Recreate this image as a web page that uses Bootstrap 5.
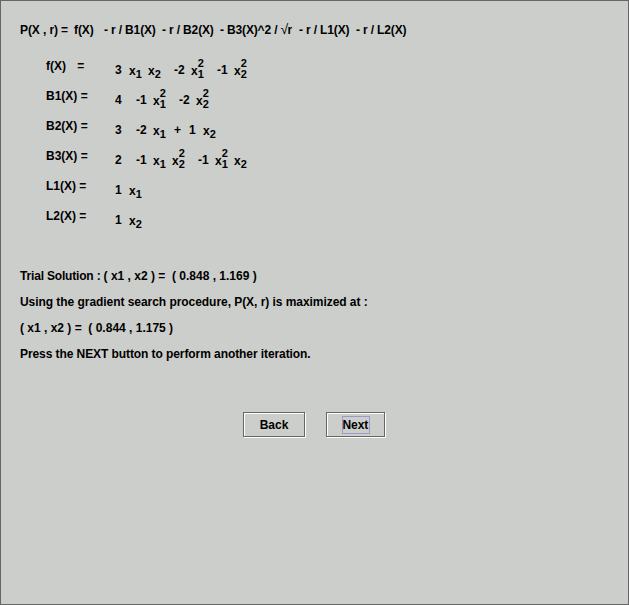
<!DOCTYPE html>
<html lang="en">
<head>
<meta charset="utf-8">
<meta name="viewport" content="width=device-width, initial-scale=1">
<title>Barrier function iteration</title>
<link rel="stylesheet" href="https://cdn.jsdelivr.net/npm/bootstrap@5.3.0/dist/css/bootstrap.min.css">
<style>
body{background:#cccecb;color:#000;font:bold 12px/16px "Liberation Sans",Arial,sans-serif;overflow:hidden}
.panel{height:605px;border:1px solid #666;padding:21px 19px 0}
.formula{height:16px;white-space:pre}
.formula>span{flex:none}
.w-lead{width:54px}.w-f{width:30px}.w-term{width:58px}.w-b3{width:79px}.w-l{width:57px}
.w-f,.w-lead{letter-spacing:-.1px}
.w-term,.w-b3,.w-l{letter-spacing:-.15px}
.root{font-size:14px;line-height:1;font-weight:normal;letter-spacing:-.8px}
.rows{padding:20px 0 0 26px}
.eq{height:30px}
.fn{width:69px;flex:none;white-space:pre}
.fn.wide{word-spacing:.4px}
.poly{padding-top:4px}
.poly>span{flex:none;white-space:pre}
.num{width:14px}
.const{width:21px}
.coef{width:17px}
.plus{width:15px}
.var{width:19px;padding-top:1px}
.var.end{width:26px}
.var.mid{width:21px}
.idx{width:8px;height:20px;margin-top:-3px;font-size:11px;line-height:11px}
.notes{padding-top:25px;line-height:26px}
.notes p{white-space:pre}
.n1 span{letter-spacing:-.18px}
.n2{letter-spacing:-.05px}
.n4{letter-spacing:-.08px}
.actions{padding:45px 0 0 223px;gap:21px}
.btn.etched{height:25px;border:1px solid #666;border-radius:0;background:none;padding:0;color:#000;font:bold 12px/16px "Liberation Sans",Arial,sans-serif;box-shadow:1px 1px #fff,inset 1px 1px #fff}
.b-back{width:62px}.b-next{width:59px}
.btn.b-back{padding-top:1px}
.focused{width:28px;height:18px;border:1px solid #99c;line-height:17px;text-align:left;letter-spacing:-.1px}
</style>
<script src="https://cdn.jsdelivr.net/npm/bootstrap@5.3.0/dist/js/bootstrap.bundle.min.js"></script>
</head>
<body>
<main class="panel">
  <div class="formula d-flex"><span class="w-lead">P(X , r) =</span><span class="w-f">f(X)</span><span class="w-term">- r / B1(X)</span><span class="w-term">- r / B2(X)</span><span class="w-b3">- B3(X)^2 / <span class="root">√</span>r</span><span class="w-l">- r / L1(X)</span><span class="w-l">- r / L2(X)</span></div>
  <div class="rows">
    <div class="eq d-flex"><span class="fn wide">f(X)   =</span><div class="poly d-flex"><span class="num">3</span><span class="var d-flex">x<span class="idx d-flex flex-column justify-content-end"><span>1</span></span></span><span class="var end d-flex">x<span class="idx d-flex flex-column justify-content-end"><span>2</span></span></span><span class="coef">-2</span><span class="var end d-flex">x<span class="idx d-flex flex-column justify-content-end"><span>2</span><span>1</span></span></span><span class="coef">-1</span><span class="var d-flex">x<span class="idx d-flex flex-column justify-content-end"><span>2</span><span>2</span></span></span></div></div>
    <div class="eq d-flex"><span class="fn">B1(X) =</span><div class="poly d-flex"><span class="const">4</span><span class="coef">-1</span><span class="var end d-flex">x<span class="idx d-flex flex-column justify-content-end"><span>2</span><span>1</span></span></span><span class="coef">-2</span><span class="var d-flex">x<span class="idx d-flex flex-column justify-content-end"><span>2</span><span>2</span></span></span></div></div>
    <div class="eq d-flex"><span class="fn">B2(X) =</span><div class="poly d-flex"><span class="const">3</span><span class="coef">-2</span><span class="var mid d-flex">x<span class="idx d-flex flex-column justify-content-end"><span>1</span></span></span><span class="plus">+</span><span class="num">1</span><span class="var d-flex">x<span class="idx d-flex flex-column justify-content-end"><span>2</span></span></span></div></div>
    <div class="eq d-flex"><span class="fn">B3(X) =</span><div class="poly d-flex"><span class="const">2</span><span class="coef">-1</span><span class="var d-flex">x<span class="idx d-flex flex-column justify-content-end"><span>1</span></span></span><span class="var end d-flex">x<span class="idx d-flex flex-column justify-content-end"><span>2</span><span>2</span></span></span><span class="coef">-1</span><span class="var d-flex">x<span class="idx d-flex flex-column justify-content-end"><span>2</span><span>1</span></span></span><span class="var d-flex">x<span class="idx d-flex flex-column justify-content-end"><span>2</span></span></span></div></div>
    <div class="eq d-flex"><span class="fn">L1(X) =</span><div class="poly d-flex"><span class="num">1</span><span class="var d-flex">x<span class="idx d-flex flex-column justify-content-end"><span>1</span></span></span></div></div>
    <div class="eq d-flex"><span class="fn">L2(X) =</span><div class="poly d-flex"><span class="num">1</span><span class="var d-flex">x<span class="idx d-flex flex-column justify-content-end"><span>2</span></span></span></div></div>
  </div>
  <div class="notes">
    <p class="mb-0 n1"><span>Trial Solution : </span>( x1 , x2 ) =  ( 0.848 , 1.169 )</p>
    <p class="mb-0 n2">Using the gradient search procedure, P(X, r) is maximized at :</p>
    <p class="mb-0 n3">( x1 , x2 ) =  ( 0.844 , 1.175 )</p>
    <p class="mb-0 n4">Press the NEXT button to perform another iteration.</p>
  </div>
  <div class="actions d-flex">
    <button type="button" class="btn etched b-back">Back</button>
    <button type="button" class="btn etched b-next d-flex align-items-center justify-content-center"><span class="focused">Next</span></button>
  </div>
</main>
</body>
</html>
